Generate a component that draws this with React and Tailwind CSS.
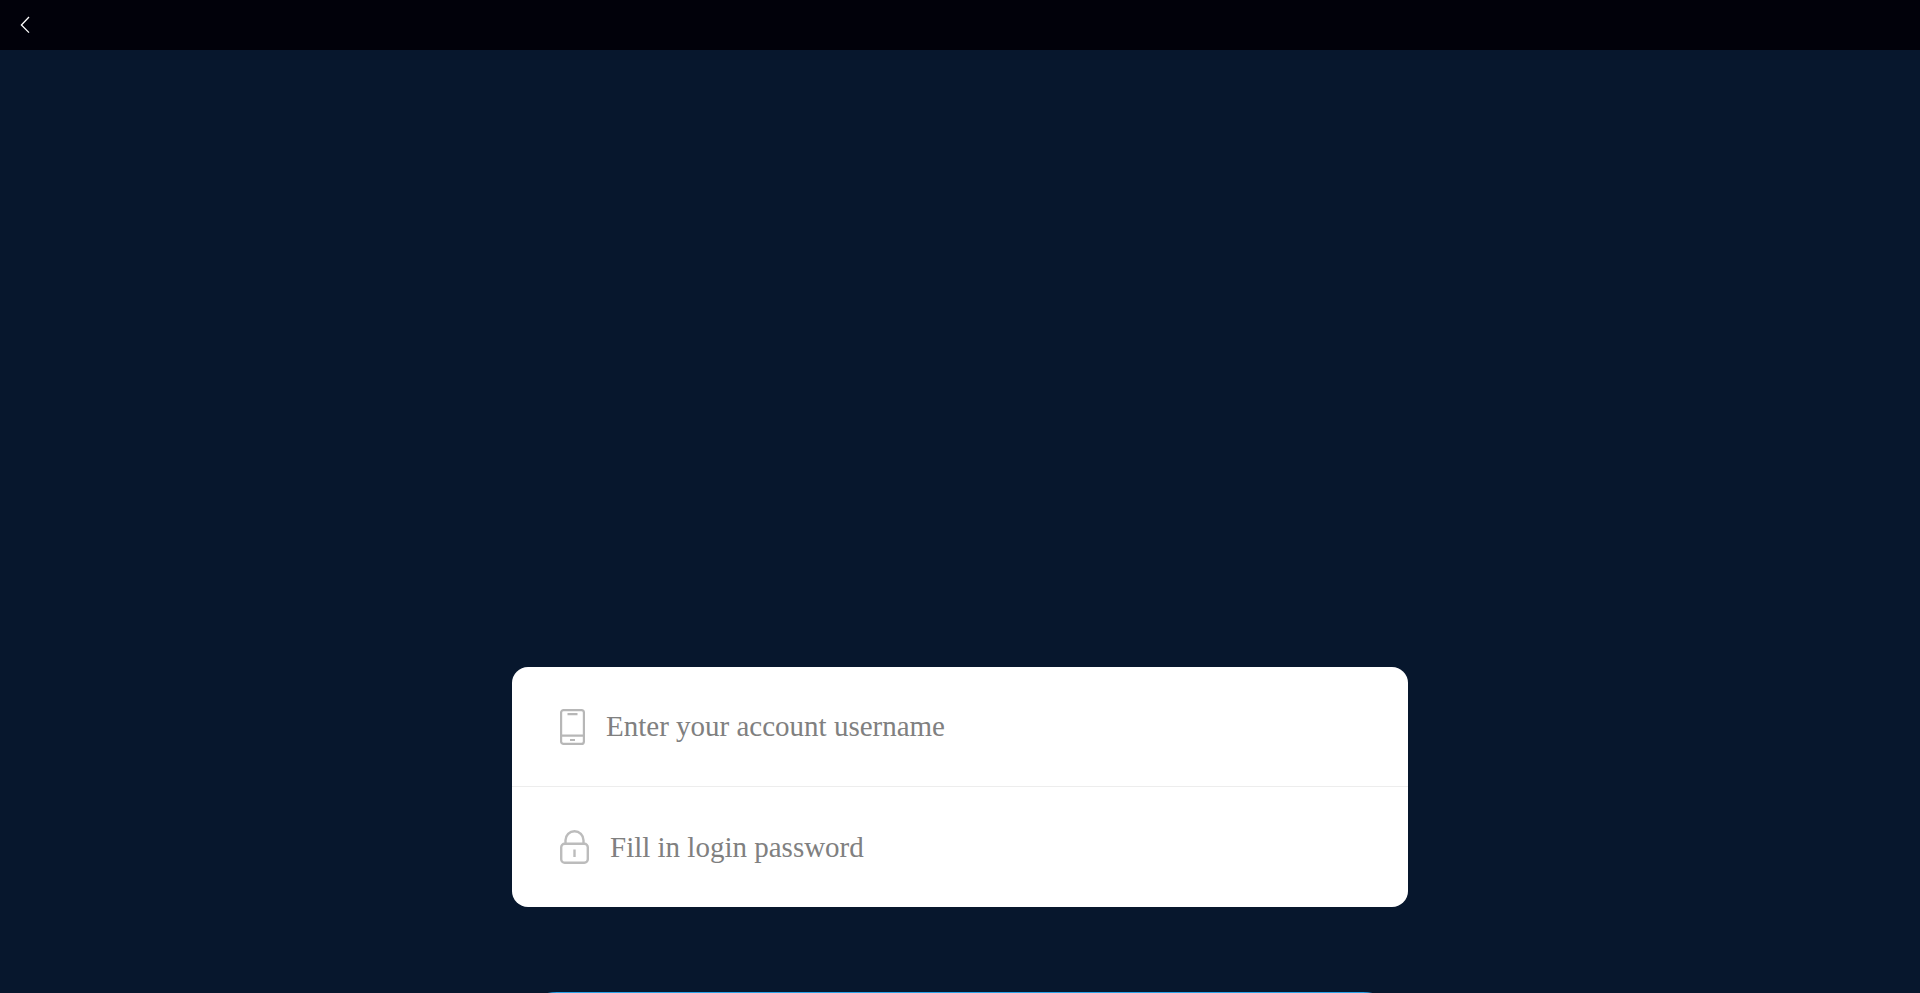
function BackIcon() {
  return (
    <svg width="10" height="18" viewBox="0 0 10 18" fill="none" stroke="#ffffff" strokeWidth="1.3" aria-hidden="true">
      <path d="M9 1 L1.4 9 L9 16.6" />
    </svg>
  );
}

function PhoneIcon() {
  return (
    <svg className="shrink-0" width="25" height="36" viewBox="0 0 25 36" fill="none" stroke="#b7b7b7" strokeWidth="2.2" aria-hidden="true">
      <rect x="1.1" y="1.1" width="22.8" height="33.8" rx="2.5" />
      <path d="M1 26.6 H24" />
      <path d="M7.5 5.2 H17.5" />
      <path d="M10 31 H15" />
    </svg>
  );
}

function LockIcon() {
  return (
    <svg className="shrink-0" width="29" height="34" viewBox="0 0 29 34" fill="none" stroke="#bcbcbc" strokeWidth="2.4" aria-hidden="true">
      <rect x="1.2" y="13.8" width="26.6" height="19" rx="3.5" />
      <path d="M5.5 14 V10.2 A9 9 0 0 1 23.5 10.2 V14" />
      <path d="M14.5 19.5 V27" />
    </svg>
  );
}

function Field({ id, label, type, icon }) {
  return (
    <label htmlFor={id} className="flex h-[120px] items-center gap-5 px-12">
      {icon}
      <input
        id={id}
        type={type}
        placeholder={label}
        aria-label={label}
        className="h-16 min-w-0 flex-1 bg-transparent pl-px text-[29px] text-gray-800 outline-none placeholder:text-[#808080]"
      />
    </label>
  );
}

export default function App() {
  return (
    <div className="flex h-screen flex-col overflow-hidden bg-[#07172d] font-['Liberation_Serif',serif]">
      <header className="flex h-[50px] shrink-0 items-center bg-[#01010a] px-5">
        <button type="button" aria-label="Back" className="flex items-center">
          <BackIcon />
        </button>
      </header>
      <main className="mx-auto w-full max-w-4xl shrink-0 pt-[617px]">
        <form>
          <div className="divide-y divide-[#ededed] overflow-hidden rounded-2xl bg-white">
            <Field id="username" type="text" label="Enter your account username" icon={<PhoneIcon />} />
            <Field id="password" type="password" label="Fill in login password" icon={<LockIcon />} />
          </div>
          <button type="button" aria-label="Login" className="mt-[85px] h-[90px] w-full rounded-full bg-[#2ba3e8]" />
        </form>
      </main>
    </div>
  );
}
